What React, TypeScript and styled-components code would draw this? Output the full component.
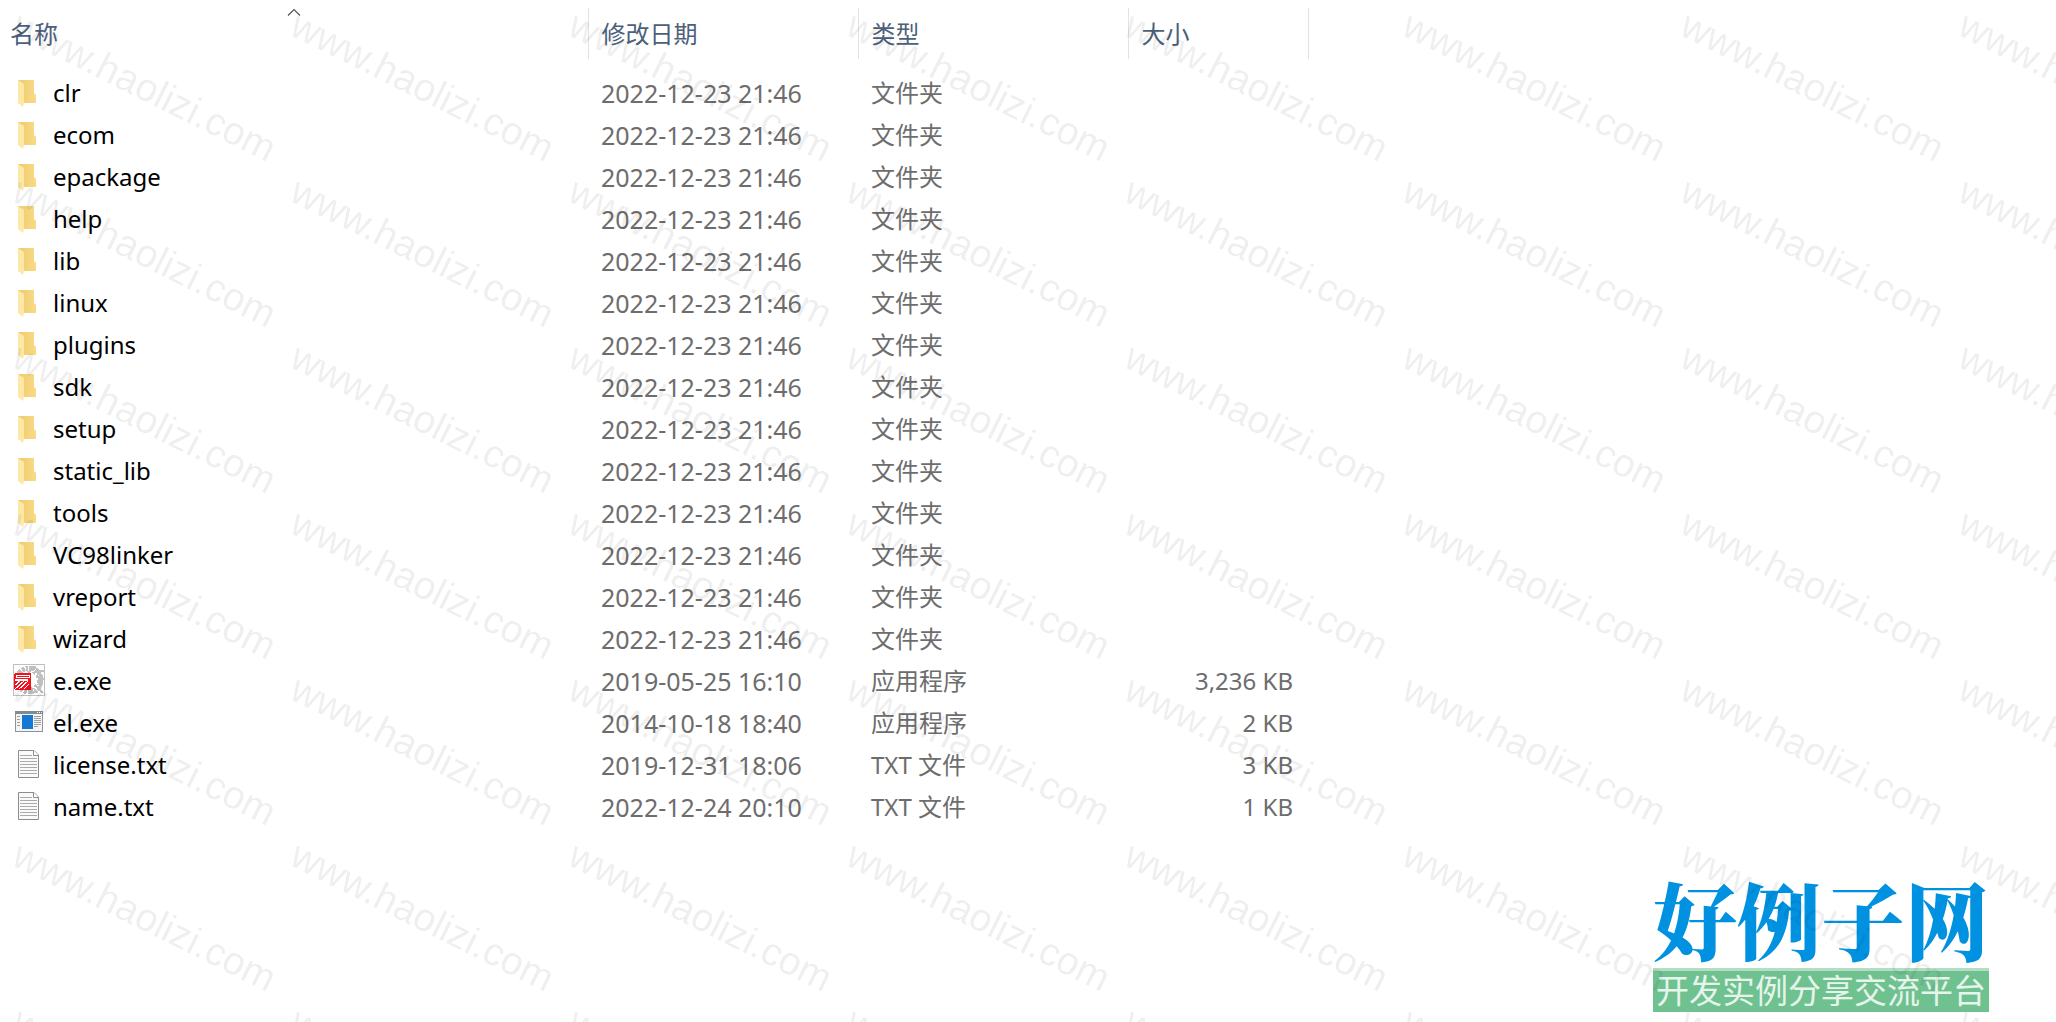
import React from "react";
import styled, { createGlobalStyle } from "styled-components";

const GlobalStyle = createGlobalStyle`
  * { box-sizing: border-box; }
  body {
    margin: 0;
    background: #fff;
    font-family: "Noto Sans", "Noto Sans CJK SC", sans-serif;
  }
`;

const Page = styled.main`
  position: relative;
  min-height: 100vh;
  overflow: hidden;
  display: flex;
  flex-direction: column;
  justify-content: space-between;
`;

const FileTable = styled.table`
  width: 1308px;
  max-width: 100%;
  table-layout: fixed;
  border-collapse: collapse;
  margin-top: 8px;
`;

const HeaderCell = styled.th<{ $width: number }>`
  width: ${(p) => p.$width}px;
  height: 51px;
  padding: 0 0 0 13px;
  border-right: 1px solid #e2e2e2;
  text-align: left;
  font-weight: 400;
  position: relative;

  &:first-child {
    padding-left: 10px;
  }
`;

const SortButton = styled.button`
  border: 0;
  padding: 0;
  background: none;
  font: inherit;
  font-size: 24px;
  line-height: 36px;
  color: #4c607a;
  cursor: pointer;
`;

const SortArrow = styled.svg`
  position: absolute;
  top: 0;
  left: 50%;
  width: 14px;
  height: 9px;
  margin-left: -7px;
`;

const Spacer = styled.tr`
  height: 13px;
`;

const Row = styled.tr`
  height: 42px;
`;

const Cell = styled.td<{ $right?: boolean }>`
  padding: 0 ${(p) => (p.$right ? 15 : 0)}px 0 13px;
  text-align: ${(p) => (p.$right ? "right" : "left")};
  font-size: 24px;
  line-height: 36px;
  color: #6d6d6d;
  white-space: nowrap;
`;

const NameCell = styled(Cell)`
  padding-left: 12px;
`;

const DateCell = styled(Cell)`
  font-size: 25px;
`;

const FileLink = styled.a`
  display: flex;
  align-items: center;
  gap: 7px;
  color: #000;
  text-decoration: none;
`;

const Icon = styled.svg`
  width: 34px;
  height: 34px;
  flex: none;
`;

const WatermarkLayer = styled.div`
  position: absolute;
  inset: 0;
  width: max-content;
  display: grid;
  grid-template-columns: repeat(8, 278px);
  grid-auto-rows: 166px;
  pointer-events: none;
`;

const Watermark = styled.span`
  padding: 4px 0 0 17px;
  font-family: "Liberation Sans", sans-serif;
  font-size: 39px;
  line-height: 40px;
  white-space: nowrap;
  color: rgba(0, 0, 0, 0.08);
  transform: rotate(26.5deg);
  transform-origin: 20px 20px;
`;

const Brand = styled.footer`
  align-self: flex-end;
  display: flex;
  flex-direction: column;
  width: 336px;
  margin: 0 67px 10px 0;
`;

const BrandName = styled.strong`
  padding-bottom: 6px;
  font-family: "Noto Serif CJK SC", "Noto Sans CJK SC", serif;
  font-weight: 900;
  font-size: 84px;
  line-height: 88px;
  color: #0092e0;
  white-space: nowrap;
`;

const Slogan = styled.span`
  height: 44px;
  border-top: 3px solid #b3dec4;
  background: #70c190;
  color: #e6f5ec;
  font-family: "Noto Sans CJK SC", sans-serif;
  font-size: 33px;
  line-height: 36px;
  text-align: center;
  white-space: nowrap;
`;

type Kind = "folder" | "epl" | "app" | "text";

function FileIcon({ kind }: { kind: Kind }) {
  if (kind === "folder") {
    return (
      <Icon viewBox="0 0 34 34" aria-hidden="true">
        <defs>
          <linearGradient id="back" x1="0" x2="1">
            <stop offset="0" stopColor="#ecca6f" />
            <stop offset="1" stopColor="#fadb85" />
          </linearGradient>
        </defs>
        <path d="M6 4H22V17L24 19V27H6Z" fill="url(#back)" />
        <path d="M6 4L12 8V27L11 31L6 27Z" fill="#ffe8a6" />
      </Icon>
    );
  }
  if (kind === "epl") {
    return (
      <Icon viewBox="0 0 34 34" aria-hidden="true" shapeRendering="crispEdges">
        <rect x="1.500" y="0.500" width="31" height="31" fill="#fff" stroke="#c0c0c0" />
        <circle cx="17" cy="16" r="12" fill="none" stroke="#c0c0c0" strokeWidth="5" strokeDasharray="6 1 3 1 2 1" />
        <circle cx="18" cy="16" r="8" fill="none" stroke="#c0c0c0" strokeWidth="2" strokeDasharray="3 2" />
        <path d="M22 2l4 5h6M26 8l3 3v4h3M29 17v5l-4 4M28 26l3 3M22 28h4" stroke="#c0c0c0" strokeWidth="2" fill="none" />
        <path d="M3 9H18L19 10V25L18 26H3L2 25V10Z" fill="#f5101e" />
        <path d="M4 11H17V13H4Z" fill="#f5101e" stroke="#fff" />
        <path d="M3 16H16M8 17L3 21M12 17L3 25M16 17L7 25M17 20L12 25" stroke="#fff" strokeWidth="1.200" fill="none" />
      </Icon>
    );
  }
  if (kind === "app") {
    return (
      <Icon viewBox="0 0 34 34" aria-hidden="true">
        <rect x="3.500" y="5.500" width="27" height="20" fill="#f4f4f4" stroke="#8d9398" />
        <path d="M3 5H31V8H3Z" fill="#838b90" />
        <path d="M25 6.500h1M27 6.500h1M29 6.500h1" stroke="#fff" />
        <rect x="10" y="9" width="11" height="14" fill="#1578d4" />
        <path d="M5 10.500h3M5 13.500h3M5 16.500h3M5 19.500h3M22 10.500h7M22 12.500h7M22 14.500h7M22 16.500h7M22 18.500h7M22 20.500h4" stroke="#a0a0a0" />
      </Icon>
    );
  }
  return (
    <Icon viewBox="0 0 34 34" aria-hidden="true">
      <path d="M6.500 2.500H22L26.500 7V29.500H6.500Z" fill="#fafafa" stroke="#8c8c8c" />
      <path d="M21.500 2.500V7.500H26.500" fill="#fff" stroke="#8c8c8c" />
      <path d="M8 7.500h12M8 10.500h17M8 13.500h17M8 16.500h17M8 19.500h17M8 22.500h17M8 25.500h17" stroke="#aaa" />
    </Icon>
  );
}

interface Entry {
  name: string;
  date: string;
  type: string;
  size: string;
  kind: Kind;
}

const folders = [
  "clr", "ecom", "epackage", "help", "lib", "linux", "plugins",
  "sdk", "setup", "static_lib", "tools", "VC98linker", "vreport", "wizard",
];

const entries: Entry[] = [
  ...folders.map((name): Entry => ({
    name, date: "2022-12-23 21:46", type: "文件夹", size: "", kind: "folder",
  })),
  { name: "e.exe", date: "2019-05-25 16:10", type: "应用程序", size: "3,236 KB", kind: "epl" },
  { name: "el.exe", date: "2014-10-18 18:40", type: "应用程序", size: "2 KB", kind: "app" },
  { name: "license.txt", date: "2019-12-31 18:06", type: "TXT 文件", size: "3 KB", kind: "text" },
  { name: "name.txt", date: "2022-12-24 20:10", type: "TXT 文件", size: "1 KB", kind: "text" },
];

const columns = [
  { label: "名称", width: 588 },
  { label: "修改日期", width: 270 },
  { label: "类型", width: 270 },
  { label: "大小", width: 180 },
];

export default function App() {
  return (
    <Page>
      <GlobalStyle />
      <FileTable>
        <thead>
          <tr>
            {columns.map((c, i) => (
              <HeaderCell key={c.label} $width={c.width} scope="col">
                <SortButton type="button">{c.label}</SortButton>
                {i === 0 && (
                  <SortArrow viewBox="0 0 14 9" aria-hidden="true">
                    <path d="M1 7.500L7 1.500L13 7.500" fill="none" stroke="#555" strokeWidth="1.200" />
                  </SortArrow>
                )}
              </HeaderCell>
            ))}
          </tr>
        </thead>
        <tbody>
          <Spacer />
          {entries.map((e) => (
            <Row key={e.name}>
              <NameCell>
                <FileLink href={"#" + e.name}>
                  <FileIcon kind={e.kind} />
                  {e.name}
                </FileLink>
              </NameCell>
              <DateCell>
                <time>{e.date}</time>
              </DateCell>
              <Cell>{e.type}</Cell>
              <Cell $right>{e.size}</Cell>
            </Row>
          ))}
        </tbody>
      </FileTable>
      <Brand>
        <BrandName>好例子网</BrandName>
        <Slogan>开发实例分享交流平台</Slogan>
      </Brand>
      <WatermarkLayer aria-hidden="true">
        {Array.from({ length: 56 }, (_, i) => (
          <Watermark key={i}>www.haolizi.com</Watermark>
        ))}
      </WatermarkLayer>
    </Page>
  );
}
